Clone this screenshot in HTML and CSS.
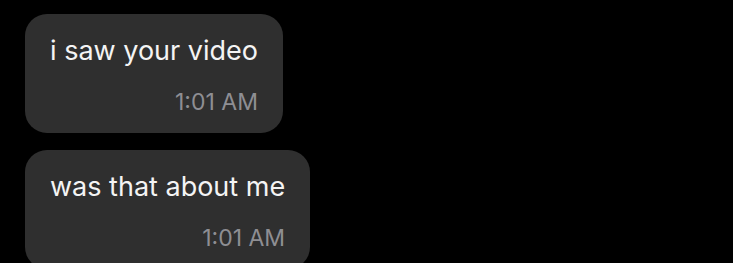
FILE: index.html
```html
<!DOCTYPE html>
<html>
<head>
<meta charset="utf-8">
<link rel="stylesheet" href="styles.css">
</head>
<body>
<div class="thread">
  <div class="bubble">
    <div class="text">i saw your video</div>
    <div class="time">1:01 AM</div>
  </div>
  <div class="bubble">
    <div class="text">was that about me</div>
    <div class="time">1:01 AM</div>
  </div>
</div>
</body>
</html>
```

FILE: styles.css
```css
html, body {
  margin: 0;
  padding: 0;
  background: #000;
  overflow: hidden;
}
.thread {
  display: flex;
  flex-direction: column;
  align-items: flex-start;
  gap: 17px;
  padding: 14px 0 0 25px;
  font-family: Inter, "Noto Sans", sans-serif;
}
.bubble {
  background: #2f2f2f;
  border-radius: 22px;
  padding: 21px 25px 17px 25px;
  display: flex;
  flex-direction: column;
}
.text {
  color: #f4f4f4;
  font-size: 27px;
  line-height: 32px;
}
.time {
  color: #8e8e93;
  font-size: 23px;
  line-height: 28px;
  text-align: right;
  margin-top: 21px;
}
```
